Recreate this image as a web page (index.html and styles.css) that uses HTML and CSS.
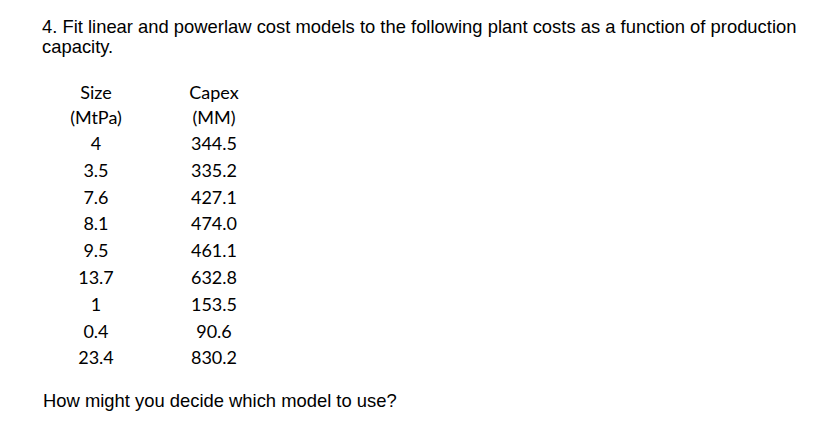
FILE: index.html
```html
<!DOCTYPE html>
<html>
<head>
<meta charset="utf-8">
<link rel="stylesheet" href="styles.css">
</head>
<body>
<div class="page">
  <p class="question">4. Fit linear and powerlaw cost models to the following plant costs as a function of production capacity.</p>
  <div class="table">
    <div class="cell head">Size</div><div class="cell head">Capex</div>
    <div class="cell head">(MtPa)</div><div class="cell head">(MM)</div>
    <div class="cell">4</div><div class="cell">344.5</div>
    <div class="cell">3.5</div><div class="cell">335.2</div>
    <div class="cell">7.6</div><div class="cell">427.1</div>
    <div class="cell">8.1</div><div class="cell">474.0</div>
    <div class="cell">9.5</div><div class="cell">461.1</div>
    <div class="cell">13.7</div><div class="cell">632.8</div>
    <div class="cell">1</div><div class="cell">153.5</div>
    <div class="cell">0.4</div><div class="cell">90.6</div>
    <div class="cell">23.4</div><div class="cell">830.2</div>
  </div>
  <p class="followup">How might you decide which model to use?</p>
</div>
</body>
</html>
```

FILE: styles.css
```css
html, body {
  margin: 0;
  padding: 0;
  background: #ffffff;
}
.page {
  width: 838px;
  height: 442px;
  padding: 17px 0 0 42px;
  box-sizing: border-box;
  color: #000000;
}
.question {
  margin: 0;
  width: 780px;
  font-family: "Liberation Sans", Arial, sans-serif;
  font-size: 18.4px;
  line-height: 20px;
}
.table {
  margin: 23px 0 0 14px;
  display: grid;
  grid-template-columns: 80px 80px;
  column-gap: 38px;
  font-family: Lato, "Open Sans", sans-serif;
  font-size: 18px;
}
.cell {
  text-align: center;
  line-height: 26.8px;
}
.cell.head {
  line-height: 25px;
}
.followup {
  margin: 20px 0 0 1px;
  font-family: "Liberation Sans", Arial, sans-serif;
  font-size: 18.4px;
  line-height: 20px;
}
```
